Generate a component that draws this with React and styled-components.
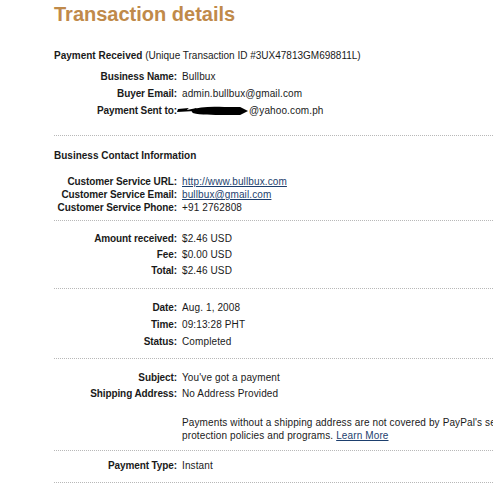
import styled, { createGlobalStyle } from "styled-components";

const GlobalStyle = createGlobalStyle`
    html, body {
        margin: 0;
        padding: 0;
        background: #fff;
    }
    body {
        font-family: "Liberation Sans", Arial, sans-serif;
        font-size: 10px;
        color: #1a1a1a;
    }
`

const Page = styled.div`
    width: 439px;
    padding-left: 54px;
    overflow: hidden;
`

const Title = styled.h1`
    margin: 0 0 22px;
    font-size: 20px;
    line-height: 26px;
    padding-top: 1px;
    font-weight: bold;
    color: #c08a4a;
`

const Heading = styled.div`
    line-height: 14px;
    margin-top: ${({ top }) => top || 0}px;
    white-space: nowrap;

    b {
        font-weight: bold;
    }
`

const Group = styled.div`
    display: grid;
    grid-template-columns: 123px 1fr;
    column-gap: 5px;
    margin-top: ${({ top }) => top || 0}px;
    margin-bottom: ${({ bottom }) => bottom || 0}px;
`

const Label = styled.div`
    text-align: right;
    font-weight: bold;
    white-space: nowrap;
    letter-spacing: -0.1px;
    line-height: ${({ h }) => h}px;
`

const Value = styled.div`
    white-space: nowrap;
    letter-spacing: 0.12px;
    line-height: ${({ h }) => h}px;
    display: flex;
    align-items: center;
`

const Link = styled.a`
    color: #1d3f6e;
    text-decoration: underline;
`

const Note = styled.div`
    grid-column: 2;
    line-height: 13px;
    letter-spacing: 0.12px;
    white-space: nowrap;
    margin-top: 14px;
`

const Divider = styled.hr`
    border: 0;
    border-top: 1px dotted #b8b8b8;
    height: 0;
    margin: 0;
    width: 439px;
`

const Redacted = styled.svg`
    margin-left: -5px;
    flex: none;
`

const Scribble = () => (
    <Redacted width="72" height="12" viewBox="0 0 73 12">
        <path d="M1 4 L12 3 L10 5 L20 3 L18 6 L0 7 Z" fill="#000" />
        <path d="M14 5 C22 2 34 1 48 2 L64 2 L72 6 L64 10 L48 10 C36 10 24 10 16 8 Z" fill="#000" />
    </Redacted>
)

const Row = ({ label, h, children }) => (
    <>
        <Label h={h}>{label}</Label>
        <Value h={h}>{children}</Value>
    </>
)

const App = () => {
    return (
        <Page>
            <GlobalStyle />
            <Title>Transaction details</Title>
            <Heading>
                <b>Payment Received</b> (Unique Transaction ID #3UX47813GM698811L)
            </Heading>
            <Group top={5} bottom={16}>
                <Row label="Business Name:" h={17}>Bullbux</Row>
                <Row label="Buyer Email:" h={17}>admin.bullbux@gmail.com</Row>
                <Row label="Payment Sent to:" h={17}>
                    <Scribble />@yahoo.com.ph
                </Row>
            </Group>
            <Divider />
            <Heading top={13}>
                <b>Business Contact Information</b>
            </Heading>
            <Group top={12} bottom={6}>
                <Row label="Customer Service URL:" h={13}>
                    <Link href="#">http://www.bullbux.com</Link>
                </Row>
                <Row label="Customer Service Email:" h={13}>
                    <Link href="#">bullbux@gmail.com</Link>
                </Row>
                <Row label="Customer Service Phone:" h={13}>+91 2762808</Row>
            </Group>
            <Divider />
            <Group top={10} bottom={9}>
                <Row label="Amount received:" h={16}>$2.46 USD</Row>
                <Row label="Fee:" h={16}>$0.00 USD</Row>
                <Row label="Total:" h={16}>$2.46 USD</Row>
            </Group>
            <Divider />
            <Group top={10} bottom={8}>
                <Row label="Date:" h={17}>Aug. 1, 2008</Row>
                <Row label="Time:" h={17}>09:13:28 PHT</Row>
                <Row label="Status:" h={17}>Completed</Row>
            </Group>
            <Divider />
            <Group top={11} bottom={8}>
                <Row label="Subject:" h={16}>You've got a payment</Row>
                <Row label="Shipping Address:" h={16}>No Address Provided</Row>
                <Note>
                    Payments without a shipping address are not covered by PayPal's seller
                    <br />
                    protection policies and programs. <Link href="#">Learn More</Link>
                </Note>
            </Group>
            <Divider />
            <Group top={7} bottom={8}>
                <Row label="Payment Type:" h={16}>Instant</Row>
            </Group>
            <Divider />
        </Page>
    )
}

export default App
